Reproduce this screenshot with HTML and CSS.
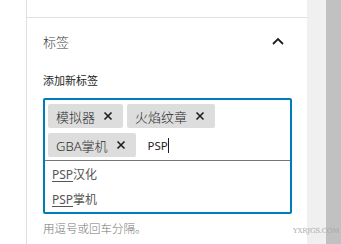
FILE: index.html
```html
<!DOCTYPE html>
<html lang="zh-CN">
<head>
<meta charset="utf-8">
<link rel="stylesheet" href="styles.css">
</head>
<body>
<div class="page">
  <div class="gutter"></div>
  <div class="panel">
    <div class="top-space"></div>
    <div class="section">
      <div class="section-head">
        <span class="section-title">标签</span>
        <svg class="chevron" width="12" height="8" viewBox="0 0 12 8"><path d="M1 7 L6 2 L11 7" fill="none" stroke="#1e1e1e" stroke-width="1.8"/></svg>
      </div>
      <div class="field-label">添加新标签</div>
      <div class="tag-box">
        <div class="tokens">
          <span class="token"><span class="token-text">模拟器</span><svg class="x" viewBox="0 0 10 10"><path d="M1.5 1.5 L8.5 8.5 M8.5 1.5 L1.5 8.5" stroke="#1e1e1e" stroke-width="1.6"/></svg></span>
          <span class="token"><span class="token-text">火焰纹章</span><svg class="x" viewBox="0 0 10 10"><path d="M1.5 1.5 L8.5 8.5 M8.5 1.5 L1.5 8.5" stroke="#1e1e1e" stroke-width="1.6"/></svg></span>
          <span class="token"><span class="token-text">GBA掌机</span><svg class="x" viewBox="0 0 10 10"><path d="M1.5 1.5 L8.5 8.5 M8.5 1.5 L1.5 8.5" stroke="#1e1e1e" stroke-width="1.6"/></svg></span>
          <span class="typed">PSP<span class="caret"></span></span>
        </div>
        <ul class="suggestions">
          <li><u>PSP</u>汉化</li>
          <li><u>PSP</u>掌机</li>
        </ul>
      </div>
      <div class="hint">用逗号或回车分隔。</div>
    </div>
  </div>
  <div class="strip"></div>
  <div class="scrollbar"></div>
</div>
<div class="watermark">YXRJGS.COM</div>
</body>
</html>
```
FILE: styles.css
```css
html, body {
  margin: 0;
  padding: 0;
  background: #fff;
}
body {
  font-family: "Noto Sans", "Noto Sans CJK SC", sans-serif;
  color: #1e1e1e;
  width: 341px;
  height: 244px;
  overflow: hidden;
  position: relative;
}
.page {
  display: flex;
  height: 244px;
}
.gutter {
  width: 26px;
  flex: none;
}
.panel {
  width: 280px;
  flex: none;
  border-left: 1px solid #e0e0e0;
  display: flex;
  flex-direction: column;
}
.top-space {
  height: 17px;
  border-bottom: 1px solid #e0e0e0;
}
.section {
  padding: 0 15px 0 16px;
}
.section-head {
  height: 46px;
  display: flex;
  align-items: center;
  justify-content: space-between;
  padding-right: 8px;
}
.section-title {
  font-size: 13px;
  font-weight: 300;
  color: #3c3c3c;
}
.chevron {
  display: block;
}
.field-label {
  font-size: 11px;
  line-height: 16px;
  margin-top: 9px;
  color: #1e1e1e;
}
.tag-box {
  margin-top: 9px;
  border: 2px solid #007cba;
  border-radius: 2px;
}
.tokens {
  display: flex;
  flex-wrap: wrap;
  gap: 5px 4px;
  padding: 4px 3px 3px;
  border-bottom: 1px solid #757575;
}
.token {
  display: flex;
  align-items: center;
  height: 24px;
  background: #dddddd;
  border-radius: 2px;
  padding: 0 10px 0 8px;
  font-size: 13px;
  font-weight: 300;
  color: #2c2c2c;
}
.token-text {
  margin-right: 8px;
}
.x {
  width: 10px;
  height: 10px;
  display: block;
}
.typed {
  display: flex;
  align-items: center;
  height: 24px;
  font-size: 11.5px;
  padding-left: 8px;
  color: #1e1e1e;
}
.caret {
  display: inline-block;
  width: 1px;
  height: 15px;
  background: #1e1e1e;
}
.suggestions {
  list-style: none;
  margin: 0;
  padding: 0;
}
.suggestions li {
  height: 25px;
  line-height: 25px;
  padding-left: 7px;
  font-size: 12px;
  color: #555;
}
.suggestions li:first-child {
  margin-top: 1px;
}
.suggestions u {
  text-decoration: underline;
  text-underline-offset: 2px;
}
.hint {
  margin-top: 6px;
  font-size: 11.5px;
  font-weight: 300;
  color: #757575;
}
.strip {
  width: 19px;
  flex: none;
  background: #f0f0f0;
}
.scrollbar {
  width: 15px;
  flex: none;
  background: #c1c1c1;
}
.watermark {
  position: absolute;
  left: 293px;
  top: 227px;
  font-family: "DejaVu Serif", serif;
  font-size: 7px;
  color: #aaa;
  letter-spacing: -0.2px;
}
```
